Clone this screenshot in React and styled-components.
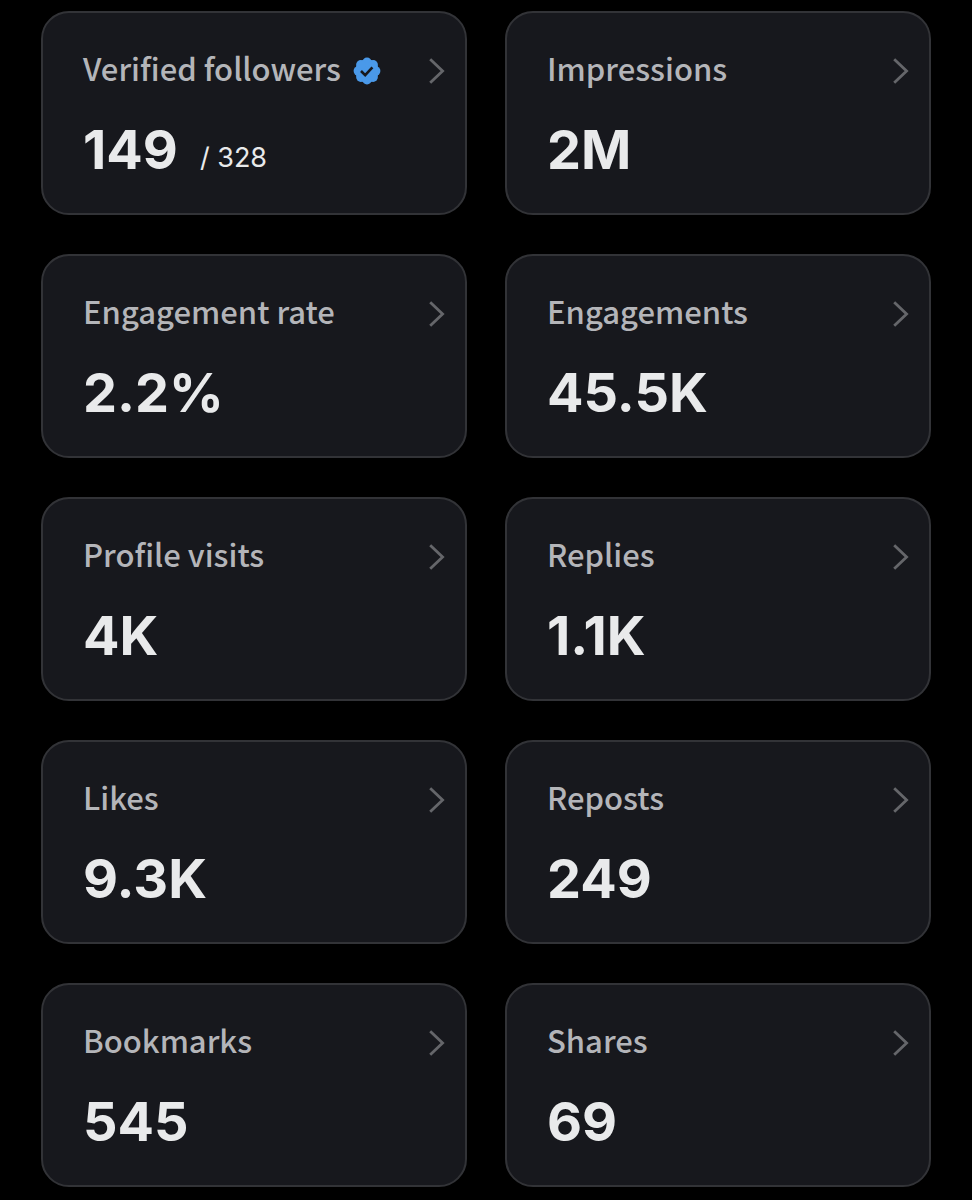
import React from 'react';
import styled, { createGlobalStyle } from 'styled-components';

const GlobalStyle = createGlobalStyle`
  * {
    box-sizing: border-box;
  }

  body {
    margin: 0;
    background-color: #000;
    font-family: Inter, sans-serif;
  }
`;

const Grid = styled.main`
  display: grid;
  grid-template-columns: 1fr 1fr;
  gap: 39px 38px;
  padding: 11px 41px 13px;
`;

const Card = styled.button`
  display: flex;
  flex-direction: column;
  gap: 23px;
  padding: 36px 20px 29px 40px;
  background-color: #17181d;
  border: 2px solid #323337;
  border-radius: 28px;
  color: #e9eaeb;
  font-family: inherit;
  text-align: left;
  cursor: pointer;
`;

const CardHeader = styled.span`
  display: flex;
  align-items: center;
  width: 100%;
  height: 44px;
`;

const Label = styled.span`
  padding-bottom: 6px;
  color: #b4b5b9;
  font-family: 'Noto Sans CJK JP', sans-serif;
  font-size: 31px;
  font-weight: 500;
  line-height: 40px;
  white-space: nowrap;
`;

const VerifiedBadge = styled.svg`
  flex-shrink: 0;
  width: 28px;
  height: 28px;
  margin-left: 12px;
`;

const Chevron = styled.svg`
  flex-shrink: 0;
  width: 18px;
  height: 28px;
  margin-left: auto;
`;

const Figures = styled.span`
  display: flex;
  align-items: flex-end;
  gap: 22px;
`;

const Value = styled.span`
  font-size: 54px;
  font-weight: 700;
  line-height: 68px;
`;

const Total = styled.span`
  font-size: 27px;
  line-height: 52px;
`;

const stats = [
  { label: 'Verified followers', value: '149', total: '328', verified: true },
  { label: 'Impressions', value: '2M' },
  { label: 'Engagement rate', value: '2.2%' },
  { label: 'Engagements', value: '45.5K' },
  { label: 'Profile visits', value: '4K' },
  { label: 'Replies', value: '1.1K' },
  { label: 'Likes', value: '9.3K' },
  { label: 'Reposts', value: '249' },
  { label: 'Bookmarks', value: '545' },
  { label: 'Shares', value: '69' },
];

const StatCard = ({ label, value, total, verified }) => (
  <Card type="button">
    <CardHeader>
      <Label>{label}</Label>
      {verified && (
        <VerifiedBadge viewBox="0 0 28 28" aria-hidden="true">
          <g fill="#4a99e9">
            <circle cx="14" cy="14" r="11.6" />
            <circle cx="14" cy="5.4" r="4.8" />
            <circle cx="20.1" cy="7.9" r="4.8" />
            <circle cx="22.6" cy="14" r="4.8" />
            <circle cx="20.1" cy="20.1" r="4.8" />
            <circle cx="14" cy="22.6" r="4.8" />
            <circle cx="7.9" cy="20.1" r="4.8" />
            <circle cx="5.4" cy="14" r="4.8" />
            <circle cx="7.9" cy="7.9" r="4.8" />
          </g>
          <path d="M8 14l4.2 4.2 7.2-7.9" fill="none" stroke="#17181d" strokeWidth="2.6" />
        </VerifiedBadge>
      )}
      <Chevron viewBox="0 0 18 28" aria-hidden="true">
        <path d="M3.2 2.2L15.6 14 3.2 25.8" fill="none" stroke="#65666a" strokeWidth="2.8" />
      </Chevron>
    </CardHeader>
    <Figures>
      <Value>{value}</Value>
      {total && <Total>/ {total}</Total>}
    </Figures>
  </Card>
);

const App = () => (
  <>
    <GlobalStyle />
    <Grid>
      {stats.map((stat) => (
        <StatCard key={stat.label} {...stat} />
      ))}
    </Grid>
  </>
);

export default App;
